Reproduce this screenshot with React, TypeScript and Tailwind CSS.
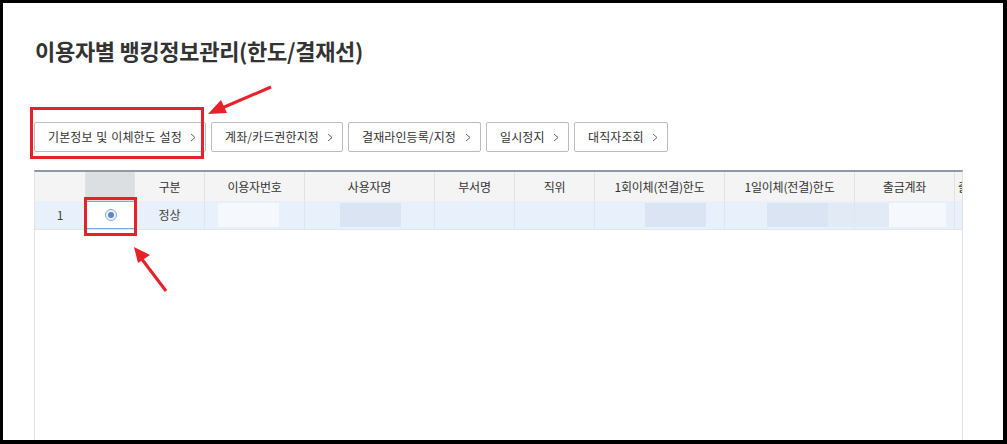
import React from "react";

const FONT = { fontFamily: '"Noto Sans CJK KR", "Noto Sans", sans-serif' };

function Chevron() {
  return (
    <svg width="6" height="9" viewBox="0 0 6 9" className="shrink-0">
      <polyline points="1,1 5,4.5 1,8" fill="none" stroke="#666" strokeWidth="1" />
    </svg>
  );
}

function Btn({ label, w }: { label: string; w: string }) {
  return (
    <button
      className={`h-[30px] ${w} flex items-center justify-between pl-[13px] pr-[9px] border border-[#b9bcc2] rounded-[2px] bg-white text-[12px] tracking-[0.1px] [word-spacing:1px] text-[#333]`}
    >
      <span>{label}</span>
      <Chevron />
    </button>
  );
}

const cols = [
  { w: "w-[51px]", label: "" },
  { w: "w-[49px]", label: "" },
  { w: "w-[70px]", label: "구분" },
  { w: "w-[100px]", label: "이용자번호" },
  { w: "w-[130px]", label: "사용자명" },
  { w: "w-[80px]", label: "부서명" },
  { w: "w-[80px]", label: "직위" },
  { w: "w-[130px]", label: "1회이체(전결)한도" },
  { w: "w-[130px]", label: "1일이체(전결)한도" },
  { w: "w-[100px]", label: "출금계좌" },
];

export default function App() {
  return (
    <div
      className="relative w-[1007px] h-[444px] bg-white border-l-[3px] border-t-[3px] border-r-[4px] border-b-[4px] border-black box-border overflow-hidden"
      style={FONT}
    >
      <div className="flex flex-col h-full pl-[31px]">
        <h1 className="mt-[35px] ml-[1px] h-[24px] leading-[24px] text-[22px] font-bold tracking-[-0.3px] text-[#333]">
          이용자별 뱅킹정보관리(한도/결재선)
        </h1>

        <div className="mt-[60px] flex gap-[5px]">
          <Btn label="기본정보 및 이체한도 설정" w="w-[172px]" />
          <Btn label="계좌/카드권한지정" w="w-[132px]" />
          <Btn label="결재라인등록/지정" w="w-[133px]" />
          <Btn label="일시정지" w="w-[83px]" />
          <Btn label="대직자조회" w="w-[94px]" />
        </div>

        <div className="mt-[18px] w-[929px] flex-1 flex flex-col overflow-hidden border-t-2 border-t-[#8f98a7] border-l border-r border-[#e3e3e3] border-b-0">
          {/* header */}
          <div className="flex h-[29px] shrink-0 bg-[#f4f4f4] text-[12px] text-[#333] tracking-[-0.2px]">
            {cols.map((c, i) => (
              <div
                key={i}
                className={`${c.w} shrink-0 flex items-center justify-center border-r border-[#e2e2e2] whitespace-nowrap ${
                  i === 1 ? "bg-[#dcdfe2]" : ""
                }`}
              >
                {c.label}
              </div>
            ))}
            <div className="w-[9px] shrink-0 flex items-center pl-[3px] overflow-hidden whitespace-nowrap">
              <span className="w-[6px] overflow-hidden">출</span>
            </div>
          </div>
          {/* row */}
          <div className="flex h-[29px] shrink-0 bg-[#e8f0fc] text-[12px] text-[#444] border-b border-[#e0e6ef]">
            <div className="w-[51px] shrink-0 flex items-center justify-center border-r border-[#dfe6f0]">1</div>
            <div className="w-[49px] shrink-0 flex items-center justify-center bg-white border-t border-b border-[#7aa9e2]">
              <span className="w-[12px] h-[12px] rounded-full border border-[#86acdc] bg-[#eef3fb] flex items-center justify-center">
                <span className="w-[6px] h-[6px] rounded-full bg-[#5a88c9]" />
              </span>
            </div>
            <div className="w-[70px] shrink-0 flex items-center justify-center border-r border-[#dfe6f0]">정상</div>
            <div className="w-[100px] shrink-0 flex items-center border-r border-[#dfe6f0] py-[2px]">
              <div className="ml-[13px] w-[61px] h-full bg-[#f5f8fd]" />
            </div>
            <div className="w-[130px] shrink-0 flex items-center border-r border-[#dfe6f0] py-[2px]">
              <div className="ml-[35px] w-[61px] h-full bg-[#dbe4f2]" />
            </div>
            <div className="w-[80px] shrink-0 border-r border-[#dfe6f0]" />
            <div className="w-[80px] shrink-0 border-r border-[#dfe6f0]" />
            <div className="w-[130px] shrink-0 flex items-center border-r border-[#dfe6f0] py-[2px]">
              <div className="ml-[50px] w-[61px] h-full bg-[#dbe4f2]" />
            </div>
            <div className="w-[130px] shrink-0 flex items-center border-r border-[#dfe6f0] py-[2px]">
              <div className="ml-[42px] w-[61px] h-full bg-[#dbe4f2]" />
              <div className="flex-1 h-full bg-[#e2eaf6]" />
            </div>
            <div className="w-[100px] shrink-0 flex items-center border-r border-[#dfe6f0] py-[2px]">
              <div className="w-[34px] h-full bg-[#e2eaf6]" />
              <div className="w-[57px] h-full bg-[#f5f8fd]" />
            </div>
            <div className="w-[9px] shrink-0" />
          </div>
          <div className="flex-1 bg-white" />
        </div>
      </div>

      {/* annotation overlay */}
      <div className="absolute left-[27px] top-[104px] w-[174px] h-[52px] border-[3px] border-[#e8202a]" />
      <div className="absolute left-[81px] top-[194px] w-[53px] h-[39px] border-[3px] border-[#e8202a]" />
      <svg className="absolute left-0 top-0 pointer-events-none" width="1000" height="437" viewBox="3 3 1000 437">
        <line x1="271" y1="87" x2="222" y2="108" stroke="#e8202a" strokeWidth="3" />
        <polygon points="208,114 221,100 227,113" fill="#e8202a" />
        <line x1="166" y1="291" x2="141" y2="258" stroke="#e8202a" strokeWidth="3" />
        <polygon points="134,247 150,255 138,263" fill="#e8202a" />
      </svg>
    </div>
  );
}
